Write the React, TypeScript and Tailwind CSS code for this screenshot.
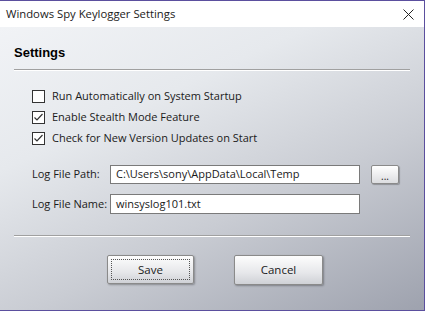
import React from "react";

const uiFont = { fontFamily: '"Open Sans", "Noto Sans", sans-serif' };

function CheckBox({ checked }: { checked: boolean }) {
    return (
        <span className="w-[13px] h-[13px] border border-[#333333] bg-white flex items-center justify-center shrink-0">
            {checked && (
                <svg width="11" height="11" viewBox="0 0 11 11">
                    <polyline points="1.5,5.5 4,8 9.5,2" fill="none" stroke="#333333" strokeWidth="1.2" />
                </svg>
            )}
        </span>
    );
}

const options = [
    { label: "Run Automatically on System Startup", checked: false },
    { label: "Enable Stealth Mode Feature", checked: true },
    { label: "Check for New Version Updates on Start", checked: true },
];

export default function App() {
    return (
        <div className="w-[428px] h-[314px] bg-white" style={uiFont}>
            <div className="w-[425px] h-[311px] flex flex-col border-t border-r border-b border-[#5b4f9e]">
                {/* Title bar */}
                <div className="h-[26px] bg-white flex items-center justify-between pl-[6px] pr-[10px] text-[11.3px] text-[#1a1a1a]">
                    <span>Windows Spy Keylogger Settings</span>
                    <svg width="11" height="11" viewBox="0 0 11 11">
                        <path d="M0.5 0.5 L10.5 10.5 M10.5 0.5 L0.5 10.5" stroke="#222222" strokeWidth="1" />
                    </svg>
                </div>

                {/* Body */}
                <div className="flex-1 flex flex-col pl-[14px] pr-[14px] bg-[linear-gradient(155deg,#f1f3f6_0%,#e6e9ed_30%,#c9ccd3_62%,#9ea2ae_100%)]">
                    <h1
                        className="mt-[18px] text-[13px] leading-[16px] font-bold text-black"
                        style={{ fontFamily: '"Liberation Sans", Arial, sans-serif' }}
                    >
                        Settings
                    </h1>
                    <div className="mt-[8px] border-t border-[#a0a0a0] border-b border-b-white" />

                    <div className="mt-[19px] pl-[18px] flex flex-col gap-[8px]">
                        {options.map((o) => (
                            <label key={o.label} className="flex items-center gap-[7px] h-[13px] text-[11px] text-[#1a1a1a] whitespace-nowrap">
                                <CheckBox checked={o.checked} />
                                <span>{o.label}</span>
                            </label>
                        ))}
                    </div>

                    <div className="mt-[20px] pl-[18px] flex flex-col gap-[10px] text-[11px] text-[#1a1a1a] whitespace-nowrap">
                        <div className="flex items-center">
                            <span className="w-[78px] shrink-0">Log File Path:</span>
                            <div className="w-[250px] h-[19px] shrink-0 bg-white border border-[#7a7a7a] flex items-center px-[5px]">
                                C:\Users\sony\AppData\Local\Temp
                            </div>
                            <button className="ml-[11px] w-[28px] h-[19px] shrink-0 rounded-[2px] border border-[#8a8a8a] bg-[linear-gradient(#ffffff,#dcdde0)] shadow-[1px_1px_1px_rgba(0,0,0,0.25)] text-[10px] leading-none pt-[3px]">
                                ...
                            </button>
                        </div>
                        <div className="flex items-center">
                            <span className="w-[78px] shrink-0">Log File Name:</span>
                            <div className="w-[250px] h-[20px] shrink-0 bg-white border border-[#7a7a7a] flex items-center px-[5px]">
                                winsyslog101.txt
                            </div>
                        </div>
                    </div>

                    <div className="mt-[21px] border-t border-[#a0a0a0] border-b border-b-white" />

                    <div className="mt-[18px] flex gap-[40px] pl-[93px] text-[11.5px] text-[#1a1a1a]">
                        <button className="w-[87px] h-[29px] p-[3px] rounded-[2px] border border-[#8a8a8a] bg-[linear-gradient(#fdfdfd,#e6e7ea_60%,#cfd1d6)] shadow-[1px_1px_2px_rgba(0,0,0,0.3)]">
                            <span className="w-full h-full flex items-center justify-center border border-dotted border-[#555555]">
                                Save
                            </span>
                        </button>
                        <button className="w-[89px] h-[30px] rounded-[2px] border border-[#8a8a8a] bg-[linear-gradient(#fdfdfd,#e6e7ea_60%,#cfd1d6)] shadow-[1px_1px_2px_rgba(0,0,0,0.3)]">
                            Cancel
                        </button>
                    </div>
                </div>
            </div>
        </div>
    );
}
